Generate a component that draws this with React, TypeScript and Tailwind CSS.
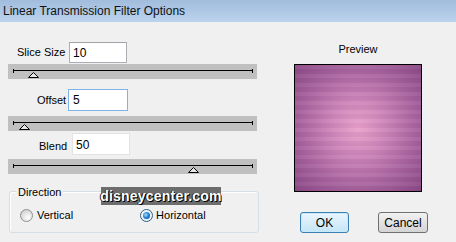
import React from "react";

function Track({ thumb }: { thumb: string }) {
  return (
    <div className="relative ml-[8px] h-[15px] w-[249px] bg-[#c0c0c0]">
      <div className="ml-[5px] flex h-[13px] w-[240px] items-center">
        <div className="h-[4px] w-px bg-black" />
        <div className="h-px flex-1 bg-black" />
        <div className="h-[4px] w-px bg-black" />
      </div>
      <svg className={`absolute top-[8px] ${thumb}`} width="11" height="6" viewBox="0 0 11 6">
        <polygon points="0.5,5.5 5.5,0.5 10.5,5.5" fill="#e6e6e6" stroke="#000" strokeWidth="1" />
      </svg>
    </div>
  );
}

function Radio({ checked }: { checked?: boolean }) {
  return (
    <div
      className={
        checked
          ? "flex h-[13px] w-[13px] items-center justify-center rounded-full border border-[#2c628b] bg-[radial-gradient(circle_at_40%_35%,#ffffff,#dbe8f3)]"
          : "h-[13px] w-[13px] rounded-full border border-[#8e8f8f] bg-[radial-gradient(circle_at_65%_70%,#ffffff,#dcdcdc_60%,#c8c8c8)]"
      }
    >
      {checked && (
        <div className="h-[7px] w-[7px] rounded-full bg-[radial-gradient(circle_at_40%_40%,#a9defe,#1a74c6_55%,#0b4c93)]" />
      )}
    </div>
  );
}

export default function App() {
  return (
    <div className="h-[242px] w-[456px] overflow-hidden bg-[#f0f0f0] font-['Liberation_Sans',Arial,sans-serif] text-[11px] text-black">
      {/* Title bar */}
      <div className="flex h-[22px] items-center bg-gradient-to-b from-[#a2bcdd] to-[#bbd3ec] pl-[3px] text-[12px] text-[#111]">
        Linear Transmission Filter Options
      </div>

      <div className="flex">
        {/* Left column */}
        <div className="flex w-[286px] flex-col">
          <div className="mt-[20px] flex h-[21px] items-center">
            <span className="ml-[17px] w-[52px] whitespace-nowrap">Slice Size</span>
            <div className="flex h-[21px] w-[58px] items-center border border-[#abadb3] border-t-[#a0a3a8] bg-white pl-[3px] text-[12px]">
              10
            </div>
          </div>
          <div className="mt-[1px]">
            <Track thumb="left-[20px]" />
          </div>

          <div className="mt-[10px] flex h-[22px] items-center">
            <span className="ml-[37px] w-[31px] whitespace-nowrap">Offset</span>
            <div className="flex h-[22px] w-[60px] items-center border border-[#7eb4ea] bg-white pl-[4px] text-[12px]">
              5
            </div>
          </div>
          <div className="mt-[5px]">
            <Track thumb="left-[11px]" />
          </div>

          <div className="mt-[2px] flex h-[22px] items-center">
            <span className="ml-[39px] mt-[4px] w-[33px] whitespace-nowrap">Blend</span>
            <div className="flex h-[22px] w-[58px] items-start border border-[#e3e3e3] bg-white pl-[3px] pt-[2px] text-[12px]">
              50
            </div>
          </div>
          <div className="mt-[4px]">
            <Track thumb="left-[180px]" />
          </div>

          {/* Direction group */}
          <div className="relative ml-[9px] mt-[17px] h-[42px] w-[250px] rounded-[3px] border border-[#d5dfe5] shadow-[inset_1px_1px_0_#ffffff]">
            <span className="absolute left-[6px] top-[-8px] bg-[#f0f0f0] px-[2px]">Direction</span>
            <div className="flex items-center pl-[10px] pt-[15px]">
              <Radio />
              <span className="ml-[4px]">Vertical</span>
              <div className="ml-[67px]">
                <Radio checked />
              </div>
              <span className="ml-[3px]">Horizontal</span>
            </div>
            <div className="absolute left-[91px] top-[-5px] flex h-[18px] w-[120px] items-center justify-center bg-[#6d6d6d] text-[14px] font-bold tracking-[0.2px] text-white [text-shadow:1px_1px_0_#000,-1px_0_0_#222]">
              disneycenter.com
            </div>
          </div>
        </div>

        {/* Right column */}
        <div className="flex flex-col pt-[21px]">
          <div className="ml-[8px] h-[13px] w-[128px] text-center text-[11px] leading-[13px]">Preview</div>
          <div className="ml-[8px] mt-[8px] h-[128px] w-[128px] border border-black bg-[radial-gradient(ellipse_at_50%_50%,#e9a3cb_0%,#cf88bb_30%,#a9659f_65%,#8a4986_100%)]">
            <div className="h-full w-full bg-[repeating-linear-gradient(180deg,rgba(255,255,255,0.04)_0px,rgba(255,255,255,0.04)_4px,rgba(60,0,60,0.045)_4px,rgba(60,0,60,0.045)_9px)]" />
          </div>
          <div className="ml-[14px] mt-[20px] flex">
            <button className="flex h-[21px] w-[49px] items-center justify-center rounded-[3px] border border-[#3c7fb1] bg-gradient-to-b from-[#eaf6fd] to-[#c4e5f6] text-[12px] shadow-[inset_0_0_0_1px_#c8e9fb]">
              OK
            </button>
            <button className="ml-[29px] flex h-[21px] w-[50px] items-center justify-center rounded-[3px] border border-[#707070] bg-gradient-to-b from-[#f2f2f2] to-[#d4d4d4] text-[12px]">
              Cancel
            </button>
          </div>
        </div>
      </div>
    </div>
  );
}
